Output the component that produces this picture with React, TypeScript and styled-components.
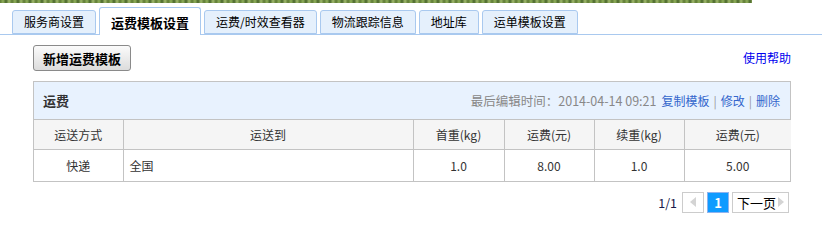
import React from "react";
import styled, { createGlobalStyle } from "styled-components";

const GlobalStyle = createGlobalStyle`
  html, body { margin: 0; padding: 0; background: #fff; }
  body {
    font-family: "Noto Sans CJK SC", "Noto Sans", sans-serif;
    font-size: 12px;
    color: #333;
  }
  * { box-sizing: border-box; }
`;

const Banner = styled.div`
  width: 752px;
  height: 3px;
  background: repeating-linear-gradient(
    90deg,
    #5d7a34 0px,
    #8fae5a 3px,
    #48652a 6px,
    #a0b96c 9px,
    #5d7a34 12px
  );
`;

const TabBar = styled.div`
  display: flex;
  align-items: flex-end;
  gap: 3px;
  height: 32px;
  padding-left: 12px;
  border-bottom: 1px solid #a9c9ef;
`;

const Tab = styled.div<{ $active?: boolean }>`
  display: flex;
  align-items: center;
  justify-content: center;
  height: ${(p) => (p.$active ? "28px" : "24px")};
  margin-bottom: ${(p) => (p.$active ? "-1px" : "0")};
  padding: 0 ${(p) => (p.$active ? "11px" : "11px")};
  padding-top: ${(p) => (p.$active ? "1px" : "0")};
  border: 1px solid #a9c9ef;
  border-bottom: ${(p) => (p.$active ? "none" : "1px solid #a9c9ef")};
  border-radius: 3px 3px 0 0;
  background: ${(p) => (p.$active ? "#fff" : "#e5f0fc")};
  color: #000;
  font-size: ${(p) => (p.$active ? "13px" : "12px")};
  font-weight: ${(p) => (p.$active ? "bold" : "normal")};
  line-height: 1;
  white-space: nowrap;
`;

const Content = styled.div`
  padding: 0 31px 0 33px;
`;

const Toolbar = styled.div`
  display: flex;
  align-items: center;
  justify-content: space-between;
  margin-top: 10px;
  height: 26px;
`;

const AddButton = styled.button`
  height: 26px;
  padding: 0 9px;
  border: 1px solid #8a8a8a;
  border-radius: 3px;
  background: linear-gradient(#fbfbfb, #dcdcdc);
  font-family: inherit;
  font-size: 13px;
  font-weight: bold;
  color: #000;
  line-height: 1;
  cursor: pointer;
`;

const HelpLink = styled.a`
  color: #0000ee;
  font-size: 12px;
  text-decoration: none;
  line-height: 1;
`;

const Panel = styled.div`
  margin-top: 10px;
  border: 1px solid #c3c3c3;
  border-bottom: none;
`;

const PanelHead = styled.div`
  display: flex;
  align-items: center;
  justify-content: space-between;
  height: 38px;
  padding: 0 10px 0 9px;
  background: #e8f2fe;
  border-bottom: 1px solid #c3c3c3;
`;

const PanelTitle = styled.span`
  font-size: 13px;
  font-weight: bold;
  color: #333;
`;

const Meta = styled.div`
  display: flex;
  align-items: center;
  gap: 4px;
  font-size: 12px;
  color: #888;
`;

const MetaTime = styled.span`
  font-size: 12.5px;
  margin-right: 1px;
`;

const ActionLink = styled.a`
  color: #3366cc;
  text-decoration: none;
`;

const Sep = styled.span`
  color: #999;
`;

const Table = styled.table`
  width: 100%;
  border-collapse: collapse;
  table-layout: fixed;
  font-size: 12px;
`;

const Th = styled.th`
  height: 29px;
  padding: 0;
  background: #f5f5f5;
  font-weight: normal;
  color: #333;
  text-align: center;
  border-left: 1px solid #c3c3c3;
  border-bottom: 1px solid #c3c3c3;
  &:first-child { border-left: none; }
`;

const Td = styled.td<{ $left?: boolean }>`
  height: 32px;
  padding: ${(p) => (p.$left ? "0 6px" : "0")};
  color: #333;
  text-align: ${(p) => (p.$left ? "left" : "center")};
  border-left: 1px solid #c3c3c3;
  border-bottom: 1px solid #c3c3c3;
  &:first-child { border-left: none; }
`;

const Pager = styled.div`
  display: flex;
  align-items: center;
  justify-content: flex-end;
  gap: 3px;
  margin-top: 10px;
  padding-right: 2px;
`;

const PageInfo = styled.span`
  color: #1a1a4a;
  font-size: 12.5px;
  margin-right: 2px;
`;

const PageBox = styled.span<{ $current?: boolean }>`
  display: inline-flex;
  align-items: center;
  justify-content: center;
  gap: 2px;
  height: 21px;
  min-width: 22px;
  padding: 0 ${(p) => (p.$current ? "0" : "4px")};
  border: 1px solid ${(p) => (p.$current ? "#8fb3ee" : "#cccccc")};
  background: ${(p) => (p.$current ? "#0f9bff" : "#fff")};
  color: ${(p) => (p.$current ? "#fff" : "#000")};
  font-weight: ${(p) => (p.$current ? "bold" : "normal")};
  font-size: 13px;
  line-height: 1;
`;

const Arrow = ({ dir }: { dir: "left" | "right" }) => (
  <svg width="6" height="10" viewBox="0 0 6 10">
    {dir === "left" ? (
      <polygon points="6,0 0,5 6,10" fill="#d4d4d4" />
    ) : (
      <polygon points="0,0 6,5 0,10" fill="#d4d4d4" />
    )}
  </svg>
);

const tabs = ["服务商设置", "运费模板设置", "运费/时效查看器", "物流跟踪信息", "地址库", "运单模板设置"];

const cols = [
  { label: "运送方式", w: 89 },
  { label: "运送到", w: 290 },
  { label: "首重(kg)", w: 91 },
  { label: "运费(元)", w: 90 },
  { label: "续重(kg)", w: 90 },
  { label: "运费(元)", w: 107 },
];

export default function App() {
  return (
    <>
      <GlobalStyle />
      <Banner />
      <TabBar>
        {tabs.map((t, i) => (
          <Tab key={t} $active={i === 1}>
            {t}
          </Tab>
        ))}
      </TabBar>
      <Content>
        <Toolbar>
          <AddButton>新增运费模板</AddButton>
          <HelpLink href="#">使用帮助</HelpLink>
        </Toolbar>
        <Panel>
          <PanelHead>
            <PanelTitle>运费</PanelTitle>
            <Meta>
              <MetaTime>最后编辑时间：2014-04-14 09:21</MetaTime>
              <ActionLink href="#">复制模板</ActionLink>
              <Sep>|</Sep>
              <ActionLink href="#">修改</ActionLink>
              <Sep>|</Sep>
              <ActionLink href="#">删除</ActionLink>
            </Meta>
          </PanelHead>
          <Table>
            <colgroup>
              {cols.map((c, i) => (
                <col key={i} style={{ width: c.w }} />
              ))}
            </colgroup>
            <thead>
              <tr>
                {cols.map((c, i) => (
                  <Th key={i}>{c.label}</Th>
                ))}
              </tr>
            </thead>
            <tbody>
              <tr>
                <Td>快递</Td>
                <Td $left>全国</Td>
                <Td>1.0</Td>
                <Td>8.00</Td>
                <Td>1.0</Td>
                <Td>5.00</Td>
              </tr>
            </tbody>
          </Table>
        </Panel>
        <Pager>
          <PageInfo>1/1</PageInfo>
          <PageBox>
            <Arrow dir="left" />
          </PageBox>
          <PageBox $current>1</PageBox>
          <PageBox>
            下一页
            <Arrow dir="right" />
          </PageBox>
        </Pager>
      </Content>
    </>
  );
}
